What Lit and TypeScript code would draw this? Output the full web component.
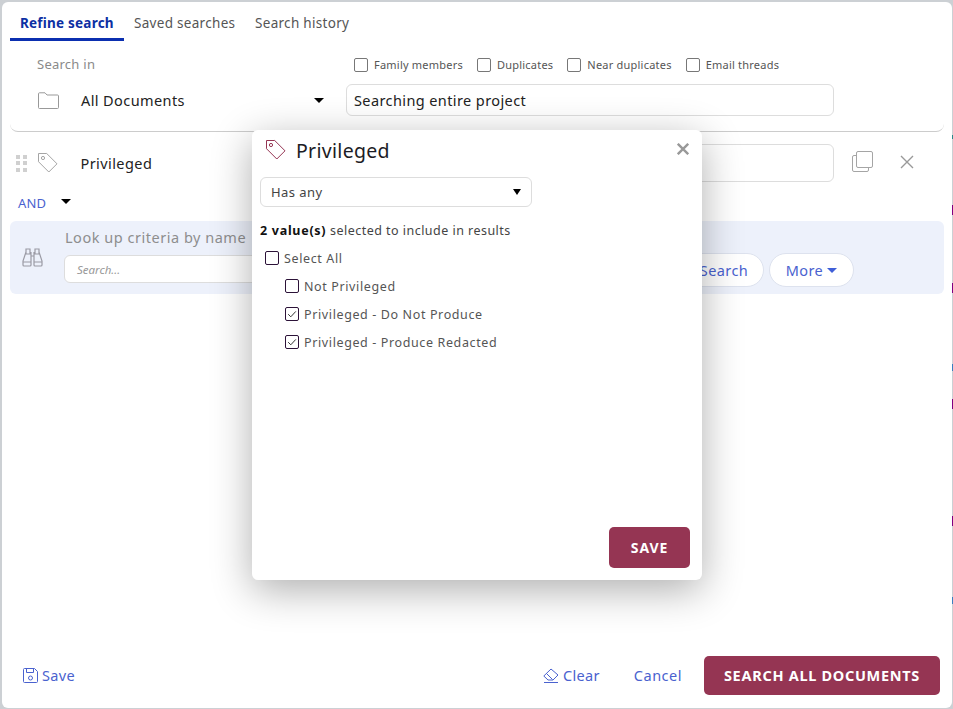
import { LitElement, html, css, svg } from "lit";
import { customElement } from "lit/decorators.js";

const tag = svg`<path d="M1.500 1.500h8.200l10.300 10.300-8.200 8.200L1.500 9.700z" fill="none" stroke="currentColor" stroke-width="1" stroke-linejoin="round"/><circle cx="6" cy="6" r="1.600" fill="none" stroke="currentColor" stroke-width="1"/>`;

const marks: [number, number, string][] = [
  [205, 10, "#800080"], [283, 10, "#800080"], [364, 7, "#3a7fc0"], [399, 10, "#800080"],
  [516, 10, "#800080"], [597, 7, "#3a7fc0"], [135, 4, "#2a8a8a"],
];

@customElement("app-root")
export class AppRoot extends LitElement {
  static styles = css`
    :host { display: block; width: 953px; height: 709px; font-family: "Noto Sans", "Open Sans", sans-serif; color: #222; }
    * { box-sizing: border-box; }
    .frame { position: relative; width: 953px; height: 709px; background: #ccd0d4; padding: 2px 1px 1px 2px; overflow: hidden; }
    .panel { width: 100%; height: 100%; background: #fff; border-radius: 6px; display: flex; flex-direction: column; padding: 0 8px 0 8px; }
    .mark { position: absolute; right: 0; width: 1px; }
    .tabs { display: flex; height: 39px; align-items: flex-start; font-size: 13.5px; color: #555; flex: none; letter-spacing: .3px; }
    .tab { padding: 12px 10px 0; height: 39px; line-height: 19px; white-space: nowrap; }
    .tab.on { width: 114px; color: #0d2fa3; font-weight: 700; border-bottom: 3px solid #0b2fb0; letter-spacing: .22px; }
    .tab.second { width: 121px; }
    .scope { height: 91px; flex: none; border-bottom: 1px solid #ccc; border-radius: 0 0 8px 8px; display: grid; grid-template-columns: 336px 488px; grid-template-rows: 43px 32px; }
    .search-in { font-size: 13px; color: #8a8a8a; padding: 14px 0 0 27px; line-height: 18px; letter-spacing: .25px; }
    .opts { display: flex; align-items: center; font-size: 11px; color: #555; padding: 12px 0 0 8px; height: 35px; letter-spacing: .22px; }
    .opt { display: flex; align-items: center; margin-right: 14px; }
    .box { width: 14px; height: 14px; border: 1px solid #777; border-radius: 2px; flex: none; display: inline-flex; align-items: center; justify-content: center; background: #fff; }
    .opt .box { margin-right: 6px; }
    .pick { display: flex; align-items: center; padding-left: 28px; font-size: 14.5px; letter-spacing: .4px; }
    .pick .ico { color: #999; width: 21px; flex: none; display: flex; }
    .pick .name { margin-left: 22px; flex: 1; }
    .caret { width: 0; height: 0; border-left: 5px solid transparent; border-right: 5px solid transparent; border-top: 5px solid #000; flex: none; }
    .pick .caret { margin-right: 22px; }
    .input { border: 1px solid #ddd; border-radius: 6px; background: #fff; }
    .field { display: flex; align-items: center; padding-left: 7px; font-size: 14.5px; letter-spacing: .4px; }
    .crit-row { display: flex; align-items: center; height: 38px; margin-top: 12px; flex: none; padding-left: 6px; }
    .grip { display: grid; grid-template-columns: 4px 4px; gap: 2.5px; margin-right: 10px; }
    .grip i { width: 4px; height: 4px; background: #d0d0d0; display: block; }
    .tag { width: 21px; height: 21px; color: #a5a5a5; flex: none; display: block; margin-top: -2px; }
    .crit-name { margin-left: 23px; width: 265px; font-size: 14.5px; flex: none; letter-spacing: .42px; }
    .crit-input { flex: none; width: 488px; height: 38px; }
    .copy { margin-left: 18px; color: #a5a5a5; display: block; margin-top: -3px; }
    .del { margin-left: 27px; color: #999; display: block; margin-top: -3px; }
    .and { display: flex; align-items: center; padding: 2px 0 0 8px; height: 39px; font-size: 13px; color: #4a62cf; flex: none; letter-spacing: .2px; }
    .and .caret { margin-left: 15px; margin-top: -2px; }
    .lookup { height: 73px; flex: none; background: #edf1fb; border-radius: 6px; display: flex; align-items: center; padding: 0 90px 0 12px; }
    .bino { color: #9a9aa4; flex: none; display: block; }
    .lk { margin-left: 22px; flex: 1; align-self: flex-start; padding-top: 6px; }
    .lk-t { font-size: 14.5px; color: #8e8e8e; line-height: 20px; letter-spacing: .52px; }
    .lk-i { margin-top: 8px; height: 28px; width: 300px; margin-left: -1px; font-style: italic; font-size: 11.5px; color: #999; padding-left: 12px; display: flex; align-items: center; }
    .pill { height: 34px; border: 1px solid #dde2ee; border-radius: 17px; background: #fff; color: #4a62cf; font-size: 14.5px; display: flex; align-items: center; justify-content: center; flex: none; align-self: flex-end; margin-bottom: 7px; letter-spacing: .4px; }
    .pill.s { width: 110px; margin-right: 5px; padding-left: 30px; }
    .pill.m { width: 85px; gap: 4px; }
    .pill .caret { border-top-color: #3f5fd8; }
    .grow { flex: 1; }
    .footer { display: flex; align-items: center; height: 39px; margin-bottom: 13px; flex: none; padding: 0 4px 0 13px; color: #4a62cf; font-size: 14.5px; letter-spacing: .35px; }
    .footer svg { flex: none; display: block; }
    .lnk { display: flex; align-items: center; gap: 4px; padding-bottom: 1px; }
    .cancel { margin: 0 22px 0 34px; padding-bottom: 1px; letter-spacing: .5px; }
    .cta { width: 236px; height: 39px; border-radius: 5px; background: #953553; color: #fff; font-weight: 700; font-size: 14.5px; display: flex; align-items: center; justify-content: center; letter-spacing: .7px; padding-bottom: 1px; }
    .modal { position: absolute; left: 252px; top: 130px; width: 450px; height: 450px; background: #fff; border-radius: 6px; box-shadow: 0 10px 40px rgba(0,0,0,.32); display: flex; flex-direction: column; padding: 9px 12px 12px 8px; }
    .m-head { display: flex; align-items: center; height: 24px; flex: none; padding-left: 5px; }
    .m-head .tagm { color: #953553; display: block; flex: none; margin-top: -3px; }
    .m-title { font-size: 19.5px; margin-left: 10px; flex: 1; line-height: 24px; color: #1c1c24; letter-spacing: .3px; }
    .close { color: #999; display: block; margin-right: 1px; margin-top: -4px; }
    .m-sel { margin-top: 14px; width: 272px; height: 30px; display: flex; align-items: center; padding: 0 10px; font-size: 13px; color: #444; justify-content: space-between; flex: none; letter-spacing: .45px; }
    .m-sel .caret { border-left-width: 4.5px; border-right-width: 4.5px; border-top-width: 6px; }
    .m-info { margin-top: 15px; height: 18px; line-height: 18px; font-size: 12.5px; color: #444; flex: none; letter-spacing: .47px; }
    .m-info b { color: #111; letter-spacing: .72px; }
    .m-row { display: flex; align-items: center; height: 28px; gap: 5px; font-size: 12.5px; color: #555; flex: none; padding-left: 5px; letter-spacing: .62px; }
    .m-row.first { margin-top: 4px; }
    .m-row.sub { padding-left: 25px; }
    .m-row .box { border-color: #2c1238; }
    .m-foot { margin-top: auto; display: flex; justify-content: flex-end; }
    .m-save { width: 81px; height: 41px; background: #953553; color: #fff; font-weight: 700; font-size: 14px; border-radius: 5px; display: flex; align-items: center; justify-content: center; letter-spacing: .9px; }
  `;

  private box(checked = false) {
    return html`<span class="box">${checked ? html`<svg width="12" height="12" viewBox="0 0 12 12"><path d="M2.200 6.200l2.600 2.600 5-5.400" fill="none" stroke="#333" stroke-width="1"/></svg>` : ""}</span>`;
  }

  render() {
    return html`
      <div class="frame">
        ${marks.map(([t, h, c]) => html`<span class="mark" style="top:${t}px;height:${h}px;background:${c}"></span>`)}
        <div class="panel">
          <div class="tabs">
            <div class="tab on">Refine search</div>
            <div class="tab second">Saved searches</div>
            <div class="tab">Search history</div>
          </div>
          <div class="scope">
            <div class="search-in">Search in</div>
            <div class="opts">
              ${["Family members", "Duplicates", "Near duplicates", "Email threads"].map(o => html`<label class="opt">${this.box()}${o}</label>`)}
            </div>
            <div class="pick">
              <span class="ico"><svg width="21" height="17" viewBox="0 0 21 17"><path d="M.5 15.500a1 1 0 0 0 1 1h18a1 1 0 0 0 1-1V4a1 1 0 0 0-1-1H9L7 .8H1.500a1 1 0 0 0-1 1z" fill="none" stroke="currentColor"/></svg></span>
              <span class="name">All Documents</span>
              <span class="caret"></span>
            </div>
            <div class="input field">Searching entire project</div>
          </div>
          <div class="crit-row">
            <span class="grip">${[0,1,2,3,4,5].map(() => html`<i></i>`)}</span>
            <svg class="tag" viewBox="0 0 21 21">${tag}</svg>
            <span class="crit-name">Privileged</span>
            <span class="input crit-input"></span>
            <svg class="copy" width="21" height="21" viewBox="0 0 21 21" fill="none" stroke="currentColor"><rect x="4.500" y=".5" width="16" height="16" rx="1.500"/><path d="M4.500 4.500H2A1.500 1.500 0 0 0 .5 6v13A1.500 1.500 0 0 0 2 20.500h13a1.500 1.500 0 0 0 1.500-1.500v-2.500"/></svg>
            <svg class="del" width="14" height="14" viewBox="0 0 14 14" stroke="currentColor" stroke-width="1.400"><path d="M1 1l12 12M13 1L1 13"/></svg>
          </div>
          <div class="and">AND<span class="caret"></span></div>
          <div class="lookup">
            <svg class="bino" width="21" height="19" viewBox="0 0 21 19" fill="none" stroke="currentColor" stroke-width="1.200"><path d="M4 1h4v5H4zM13 1h4v5h-4zM4 4L1 13v4a1 1 0 0 0 1 1h6a1 1 0 0 0 1-1V4M17 4l3 9v4a1 1 0 0 1-1 1h-6a1 1 0 0 1-1-1V4M9 8h3M1 14h8M12 14h8"/></svg>
            <div class="lk">
              <div class="lk-t">Look up criteria by name</div>
              <div class="input lk-i">Search...</div>
            </div>
            <div class="pill s">Search</div>
            <div class="pill m">More<span class="caret"></span></div>
          </div>
          <div class="grow"></div>
          <div class="footer">
            <div class="lnk"><svg width="15" height="15" viewBox="0 0 15 15" fill="none" stroke="currentColor"><path d="M.5 1.500a1 1 0 0 1 1-1h10l3 3v10a1 1 0 0 1-1 1h-12a1 1 0 0 1-1-1z"/><path d="M3.500.5v4h7v-4"/><circle cx="7.500" cy="10" r="2"/></svg>Save</div>
            <div class="grow"></div>
            <div class="lnk"><svg width="16" height="15" viewBox="0 0 16 15" fill="none" stroke="currentColor"><path d="M.8 8L8 1l7 6-5 5H5zM3.500 5.500l6 6M1 14.500h14"/></svg>Clear</div>
            <div class="cancel">Cancel</div>
            <div class="cta">SEARCH ALL DOCUMENTS</div>
          </div>
        </div>
        <div class="modal">
          <div class="m-head">
            <svg class="tagm" width="21" height="21" viewBox="0 0 21 21">${tag}</svg>
            <span class="m-title">Privileged</span>
            <svg class="close" width="12" height="12" viewBox="0 0 12 12" stroke="currentColor" stroke-width="2.400"><path d="M.8.800l10.400 10.400M11.200.800L.8 11.200"/></svg>
          </div>
          <div class="input m-sel">Has any<span class="caret"></span></div>
          <div class="m-info"><b>2 value(s)</b> selected to include in results</div>
          <div class="m-row first">${this.box()}Select All</div>
          <div class="m-row sub">${this.box()}Not Privileged</div>
          <div class="m-row sub">${this.box(true)}Privileged - Do Not Produce</div>
          <div class="m-row sub">${this.box(true)}Privileged - Produce Redacted</div>
          <div class="m-foot"><div class="m-save">SAVE</div></div>
        </div>
      </div>
    `;
  }
}
